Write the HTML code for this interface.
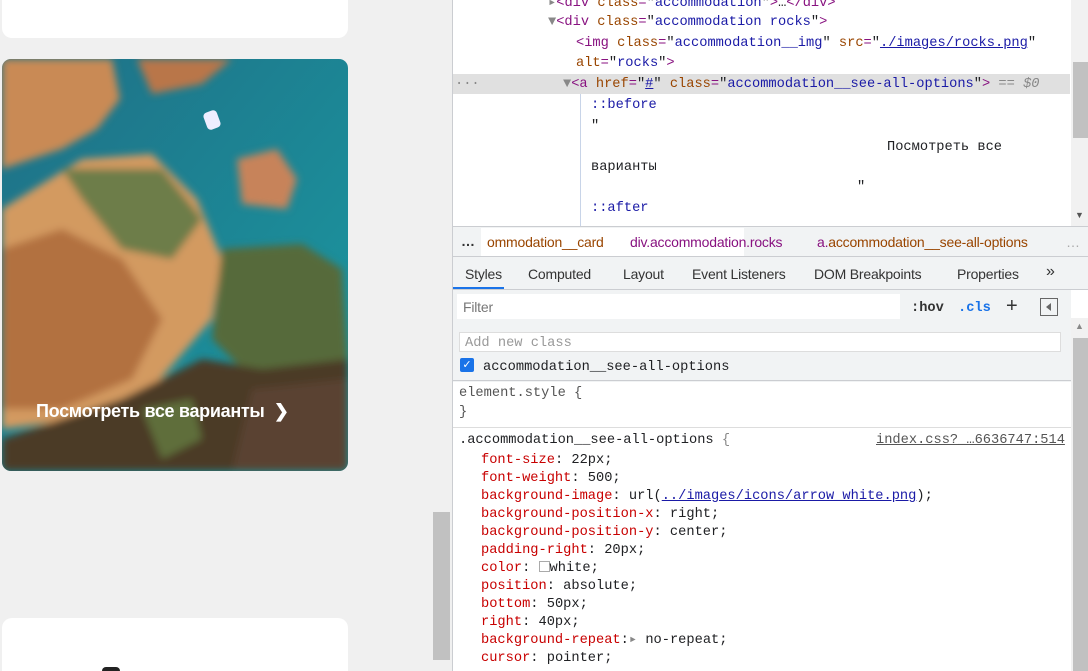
<!DOCTYPE html>
<html style="width:1088px;height:671px;overflow:hidden"><head><meta charset="utf-8"><style>
*{margin:0;padding:0;box-sizing:border-box}
body{width:1088px;height:671px;overflow:hidden;background:#f0f0f0;position:relative;font-family:"Liberation Sans",sans-serif}
.card{position:absolute;background:#fff;border-radius:10px}
.dt{position:absolute;left:452px;top:0;width:636px;height:671px;background:#fff;border-left:1px solid #cbcdd1;overflow:hidden}
.m{font-family:"Liberation Mono",monospace;font-size:13.7px;line-height:16px;margin-top:2px;white-space:pre;position:absolute;color:#202124}
.tg{color:#881280}.at{color:#994500}.av{color:#1a1aa6}.ln{color:#1a1aa6;text-decoration:underline}
.pr{color:#c80000}.g{color:#888}
.s{position:absolute;font-size:14px;color:#333;letter-spacing:-0.2px}
</style></head><body>
<div class="card" style="left:2px;top:-20px;width:346px;height:58px"></div>
<div class="card" style="left:2px;top:618px;width:346px;height:53px;border-radius:10px 10px 0 0"></div>
<div style="position:absolute;left:102px;top:667px;width:18px;height:4px;border-radius:9px 9px 0 0;background:#222"></div>
<div style="position:absolute;left:2px;top:59px;width:346px;height:412px;border-radius:9px;overflow:hidden">
<svg width="346" height="412" viewBox="0 0 346 412">
<defs><filter id="b"><feGaussianBlur stdDeviation="4"/></filter>
<linearGradient id="w" x1="0" y1="0" x2="1" y2="1"><stop offset="0" stop-color="#1f6f86"/><stop offset="1" stop-color="#1a9aa2"/></linearGradient></defs>
<rect width="346" height="412" fill="url(#w)"/>
<g filter="url(#b)">
<path d="M0 0H110L118 40 95 70 60 90 0 110Z" fill="#c98a55"/>
<path d="M135 0H230L200 25 150 35Z" fill="#b9764a"/>
<path d="M0 150L80 100 150 95 195 140 220 200 210 260 150 330 80 360 0 370Z" fill="#d39a60"/>
<path d="M0 190L60 170 120 200 160 260 130 320 60 350 0 350Z" fill="#b27140"/>
<path d="M235 100L275 90 295 120 285 150 240 145Z" fill="#c7835a"/>
<path d="M60 110L160 110 200 160 170 200 120 190 80 140Z" fill="#6d7d48"/>
<path d="M220 190L300 185 340 210 346 300 300 330 250 320 210 280Z" fill="#566a3a"/>
<path d="M120 340L200 300 260 310 346 300 346 412 0 412 0 380Z" fill="#4b3a26"/>
<path d="M140 350L190 340 200 380 160 400Z" fill="#5f6e3a"/>
<path d="M250 330L346 320 346 412 230 412Z" fill="#5a4332"/>
</g>
<rect x="203" y="52" width="14" height="18" rx="4" fill="#eef" transform="rotate(-20 210 61)"/>
</svg>
<div style="position:absolute;left:34px;top:342px;color:#fff;font-size:18px;font-weight:bold;letter-spacing:-0.3px">Посмотреть все варианты&nbsp; ❯</div>
</div>
<div style="position:absolute;left:433px;top:512px;width:17px;height:148px;background:#c1c1c1"></div>

<div class="dt">
<div class="m" style="left:95px;top:-6px"><span class="g">▸</span><span class="tg">&lt;div</span> <span class="at">class</span><span class="tg">=</span>"<span class="av">accommodation</span>"<span class="tg">&gt;</span>…<span class="tg">&lt;/div&gt;</span></div>
<div class="m" style="left:95px;top:13px"><span class="g">▼</span><span class="tg">&lt;div</span> <span class="at">class</span><span class="tg">=</span>"<span class="av">accommodation rocks</span>"<span class="tg">&gt;</span></div>
<div class="m" style="left:123px;top:34px"><span class="tg">&lt;img</span> <span class="at">class</span><span class="tg">=</span>"<span class="av">accommodation__img</span>" <span class="at">src</span><span class="tg">=</span>"<span class="ln">./images/rocks.png</span>"</div>
<div class="m" style="left:123px;top:54px"><span class="at">alt</span><span class="tg">=</span>"<span class="av">rocks</span>"<span class="tg">&gt;</span></div>
<div style="position:absolute;left:0;top:74px;width:617px;height:20px;background:#e0e0e0"></div>
<div class="m g" style="left:2px;top:75px">···</div>
<div class="m" style="left:110px;top:75px"><span class="g">▼</span><span class="tg">&lt;a</span> <span class="at">href</span><span class="tg">=</span>"<span class="ln">#</span>" <span class="at">class</span><span class="tg">=</span>"<span class="av">accommodation__see-all-options</span>"<span class="tg">&gt;</span> <span class="g">== <i>$0</i></span></div>
<div style="position:absolute;left:127px;top:94px;width:1px;height:132px;background:#c8d4e8"></div>
<div class="m" style="left:138px;top:96px;color:#1a1aa6">::before</div>
<div class="m" style="left:138px;top:117px">"</div>
<div class="m" style="left:434px;top:138px">Посмотреть все</div>
<div class="m" style="left:138px;top:158px">варианты</div>
<div class="m" style="left:404px;top:178px">"</div>
<div class="m" style="left:138px;top:199px;color:#1a1aa6">::after</div>
<div style="position:absolute;left:618px;top:0;width:18px;height:226px;background:#f1f1f1"></div>
<div style="position:absolute;left:620px;top:62px;width:15px;height:76px;background:#c1c1c1"></div>
<div style="position:absolute;left:622px;top:210px;font-size:9px;color:#555">▼</div>
<div style="position:absolute;left:0;top:226px;width:636px;height:31px;background:#f1f3f4;border-top:1px solid #cbcdd1;border-bottom:1px solid #cbcdd1"></div>
<div class="s" style="left:8px;top:233px;font-weight:bold">…</div>
<div style="position:absolute;left:28px;top:228px;width:263px;height:28px;background:#fff"></div>
<div class="s" style="left:34px;top:234px;color:#994500">ommodation__card</div>
<div class="s" style="left:177px;top:234px;color:#881280">div.accommodation.rocks</div>
<div class="s" style="left:364px;top:234px;color:#881280">a.<span style="color:#994500">accommodation__see-all-options</span></div>
<div class="s" style="left:613px;top:234px;color:#aaa">…</div>
<div style="position:absolute;left:0;top:257px;width:636px;height:33px;background:#f1f3f4;border-bottom:1px solid #cbcdd1"></div>
<div class="s" style="left:12px;top:266px">Styles</div>
<div style="position:absolute;left:0;top:287px;width:51px;height:2px;background:#1a73e8"></div>
<div class="s" style="left:75px;top:266px">Computed</div>
<div class="s" style="left:170px;top:266px">Layout</div>
<div class="s" style="left:239px;top:266px">Event Listeners</div>
<div class="s" style="left:361px;top:266px">DOM Breakpoints</div>
<div class="s" style="left:504px;top:266px">Properties</div>
<div class="s" style="left:593px;top:263px;font-size:16px">»</div>
<div style="position:absolute;left:0;top:290px;width:618px;height:92px;background:#f1f3f4"></div>
<div style="position:absolute;left:4px;top:294px;width:443px;height:25px;background:#fff"></div>
<div class="s" style="left:10px;top:299px;color:#777">Filter</div>
<div class="m" style="left:458px;top:299px;font-weight:bold;color:#333">:hov</div>
<div class="m" style="left:505px;top:299px;font-weight:bold;color:#1a73e8">.cls</div>
<div class="s" style="left:553px;top:295px;font-size:20px">+</div>
<div style="position:absolute;left:587px;top:298px;width:18px;height:18px;border:1px solid #666"></div>
<div style="position:absolute;left:593px;top:303px;width:0;height:0;border-top:4px solid transparent;border-bottom:4px solid transparent;border-right:5px solid #666"></div>
<div style="position:absolute;left:6px;top:332px;width:602px;height:20px;background:#fff;border:1px solid #ddd"></div>
<div class="m" style="left:12px;top:334px;color:#999">Add new class</div>
<div style="position:absolute;left:7px;top:358px;width:14px;height:14px;background:#1a73e8;border-radius:2px;color:#fff;font-size:11px;text-align:center;line-height:14px">✓</div>
<div class="m" style="left:30px;top:358px">accommodation__see-all-options</div>
<div style="position:absolute;left:0;top:380px;width:618px;height:1px;background:#cbcdd1"></div>
<div class="m" style="left:6px;top:384px;color:#555">element.style {</div>
<div class="m" style="left:6px;top:403px;color:#555">}</div>
<div style="position:absolute;left:0;top:427px;width:618px;height:1px;background:#ddd"></div>
<div class="m" style="left:6px;top:431px">.accommodation__see-all-options <span class="g">{</span></div>
<div class="m" style="left:423px;top:431px;color:#555;text-decoration:underline">index.css?_…6636747:514</div>
<div class="m" style="left:28px;top:451px"><span class="pr">font-size</span>: 22px;</div>
<div class="m" style="left:28px;top:469px"><span class="pr">font-weight</span>: 500;</div>
<div class="m" style="left:28px;top:487px"><span class="pr">background-image</span>: url(<span class="ln">../images/icons/arrow_white.png</span>);</div>
<div class="m" style="left:28px;top:505px"><span class="pr">background-position-x</span>: right;</div>
<div class="m" style="left:28px;top:523px"><span class="pr">background-position-y</span>: center;</div>
<div class="m" style="left:28px;top:541px"><span class="pr">padding-right</span>: 20px;</div>
<div class="m" style="left:28px;top:559px"><span class="pr">color</span>: <span style="display:inline-block;width:11px;height:11px;border:1px solid #aaa;vertical-align:-1px"></span>white;</div>
<div class="m" style="left:28px;top:577px"><span class="pr">position</span>: absolute;</div>
<div class="m" style="left:28px;top:595px"><span class="pr">bottom</span>: 50px;</div>
<div class="m" style="left:28px;top:613px"><span class="pr">right</span>: 40px;</div>
<div class="m" style="left:28px;top:631px"><span class="pr">background-repeat</span>:<span class="g">▸</span> no-repeat;</div>
<div class="m" style="left:28px;top:649px"><span class="pr">cursor</span>: pointer;</div>
<div style="position:absolute;left:618px;top:318px;width:18px;height:353px;background:#f1f1f1"></div>
<div style="position:absolute;left:620px;top:338px;width:15px;height:333px;background:#c1c1c1"></div>
<div style="position:absolute;left:622px;top:321px;font-size:9px;color:#888">▲</div>
</div>
</body></html>
